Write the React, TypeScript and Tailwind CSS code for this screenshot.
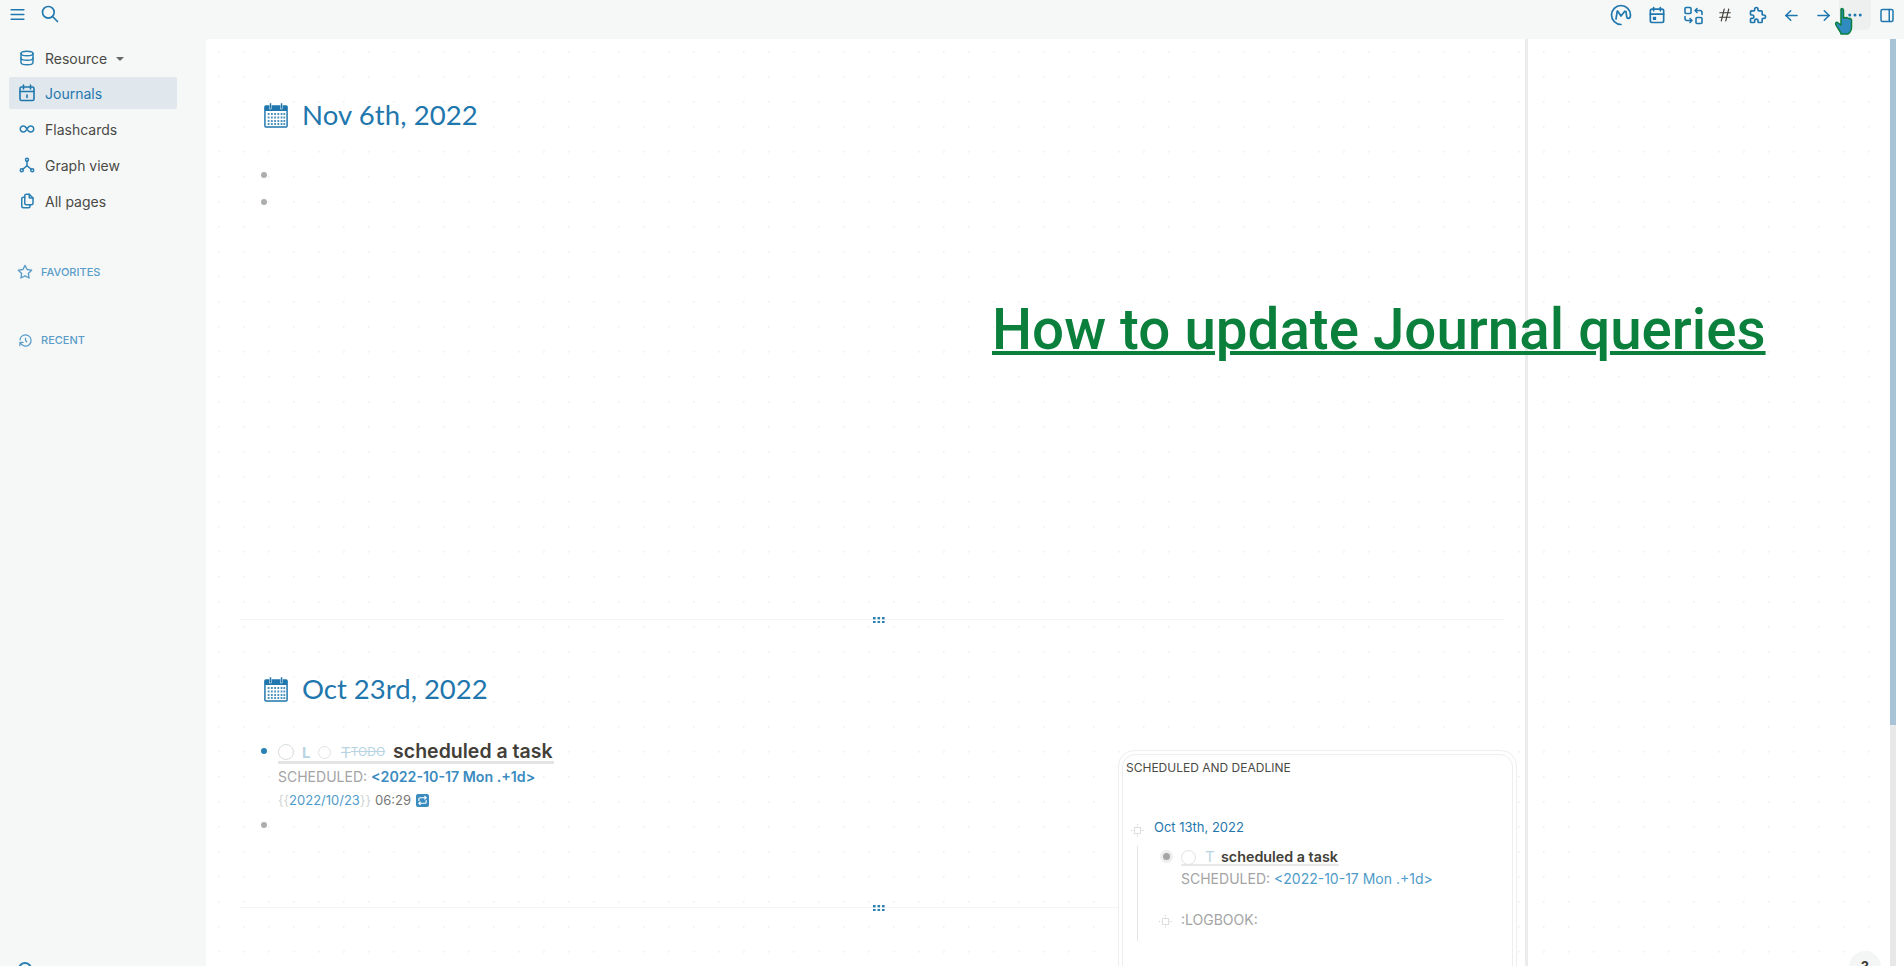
import * as React from 'react';
import {
  TbMenu2, TbSearch, TbDatabase, TbInfinity, TbHierarchy, TbFiles, TbStar, TbHistory,
  TbCalendarEvent, TbHash, TbPuzzle, TbArrowLeft, TbArrowRight, TbDots, TbLayoutSidebarRight, TbRepeat,
} from 'react-icons/tb';

function JournalIcon() {
  return (
    <svg width="24" height="26" viewBox="0 0 26 26" preserveAspectRatio="none" className="ml-[1px] shrink-0">
      <path d="M2 4h22a1 1 0 0 1 1 1v19a1 1 0 0 1-1 1H2a1 1 0 0 1-1-1V5a1 1 0 0 1 1-1z" fill="#fff" stroke="#1f77ad" strokeWidth="1.6" />
      <rect x="1" y="4" width="24" height="5" fill="#1f77ad" />
      <rect x="6" y="1" width="2" height="6" fill="#1f77ad" stroke="#fff" strokeWidth="0.5" />
      <rect x="18" y="1" width="2" height="6" fill="#1f77ad" stroke="#fff" strokeWidth="0.5" />
      {[11, 14.5, 18, 21].map((y) =>
        [4, 7.5, 11, 14.5, 18, 21].map((x) => <rect key={`${x}-${y}`} x={x} y={y} width="2" height="2" fill="#4f93bd" />),
      )}
    </svg>
  );
}

function Grip() {
  return (
    <svg width="12" height="6" viewBox="0 0 12 6" className="ml-[14px] bg-white">
      {[0, 4.5, 9].map((x) => [0, 4].map((y) => <rect key={`${x}-${y}`} x={x} y={y} width="2.6" height="2.4" fill="#2a7fb3" />))}
    </svg>
  );
}

function Divider() {
  return (
    <div className="ml-[34px] mr-[21px] flex h-0 items-center justify-center border-t border-[#f3f4f4]">
      <Grip />
    </div>
  );
}

function Dashed() {
  return (
    <svg width="13" height="13" viewBox="0 0 13 13" className="shrink-0">
      <rect x="3.500" y="3.500" width="6" height="6" fill="none" stroke="#bdbdbd" strokeWidth="1" strokeDasharray="1 1" />
      <path d="M6.500 0v2.500M6.500 10.500v2.500M0 6.500h2.500M10.500 6.500h2.500" stroke="#cfcfcf" strokeWidth="1" strokeDasharray="1 1" />
    </svg>
  );
}

const navItems = [
  { label: 'Flashcards', icon: <TbInfinity size={18} /> },
  { label: 'Graph view', icon: <TbHierarchy size={18} /> },
  { label: 'All pages', icon: <TbFiles size={18} /> },
];

export default function App() {
  return (
    <div className="relative h-screen overflow-hidden bg-[#f6f8f8] font-['Inter',sans-serif] text-[#433f38]">
      <header className="flex h-[39px] items-start text-[#1f77ad]">
        <div className="flex items-center pl-[8px] pt-[4px]">
          <TbMenu2 size={19} />
          <TbSearch size={20} className="ml-[13px]" />
        </div>
        <div className="ml-auto flex items-center pr-[8px]">
          <div className="flex h-[30px] w-[24px] items-center justify-center">
            <svg width="22" height="22" viewBox="0 0 22 22" fill="none" stroke="currentColor" strokeWidth="1.7" strokeLinecap="round" strokeLinejoin="round">
              <path d="M11 20.500a9.500 9.500 0 1 1 9.500-9.500c0 2-1 3.400-2.200 3.400-1.100 0-1.600-1-1.700-2.400L16 7.500l-1.200-.3L11 12 7.500 7l-.3.3L6 15" />
            </svg>
          </div>
          <div className="ml-[13px] flex w-[22px] justify-center"><TbCalendarEvent size={20} /></div>
          <div className="ml-[14px] flex w-[22px] justify-center">
            <svg width="19" height="19" viewBox="0 0 19 19" fill="none" stroke="currentColor" strokeWidth="1.6" strokeLinecap="round" strokeLinejoin="round">
              <rect x="1" y="1.500" width="6" height="6" rx="1" />
              <rect x="12" y="11.500" width="6" height="6" rx="1" />
              <path d="M11 4.500h5a2 2 0 0 1 2 2v2M11 4.500l2-2M11 4.500l2 2M8 14.500H3a2 2 0 0 1-2-2v-2M8 14.500l-2-2M8 14.500l-2 2" />
            </svg>
          </div>
          <div className="ml-[10px] flex w-[22px] justify-center text-[#433f38]"><TbHash size={18} strokeWidth={1.5} /></div>
          <div className="ml-[11px] flex w-[22px] justify-center"><TbPuzzle size={20} /></div>
          <div className="ml-[11px] flex w-[22px] justify-center"><TbArrowLeft size={19} /></div>
          <div className="ml-[10px] flex w-[22px] justify-center"><TbArrowRight size={19} /></div>
          <div className="ml-[5px] flex h-[30px] w-[32px] items-center justify-center rounded-b-md bg-[#eef0f0]"><TbDots size={18} /></div>
          <div className="ml-[7px] flex w-[18px] justify-center"><TbLayoutSidebarRight size={19} /></div>
        </div>
      </header>

      <div className="flex h-[927px]">
        <aside className="w-[206px] shrink-0 pl-[9px] pr-[29px] pt-[1px] text-[14px]">
          <div className="flex h-[36px] items-center pl-[9px] text-[#4a4a45]">
            <span className="flex w-[27px] text-[#2a7fb3]"><TbDatabase size={18} /></span>
            Resource
            <span className="ml-[9px] mt-[1px] h-0 w-0 border-x-[4px] border-t-[4px] border-x-transparent border-t-[#666]" />
          </div>
          <div className="mt-[1px] flex h-[32px] items-center rounded-[2px] bg-[#e0e8ee] pl-[9px] text-[#1f77ad]">
            <span className="flex w-[27px]">
              <svg width="18" height="18" viewBox="0 0 18 18" fill="none" stroke="currentColor" strokeWidth="1.6" strokeLinecap="round" strokeLinejoin="round">
                <rect x="2" y="3" width="14" height="13.500" rx="1.500" />
                <path d="M5.500 1v4M12.500 1v4M2 7.500h14M9 11v2.500" />
              </svg>
            </span>
            Journals
          </div>
          {navItems.map((item, i) => (
            <div key={item.label} className={`flex h-[36px] items-center pl-[9px] text-[#4a4a45] ${i === 0 ? 'mt-[2px]' : ''}`}>
              <span className="flex w-[27px] text-[#2a7fb3]">{item.icon}</span>
              {item.label}
            </div>
          ))}
          <div className="mt-[45px] flex h-[16px] items-center pl-[8px] text-[11px] font-medium text-[#5a9cc8]">
            <TbStar size={16} className="mr-[8px]" /> FAVORITES
          </div>
          <div className="mt-[52px] flex h-[16px] items-center pl-[9px] text-[11px] font-medium text-[#5a9cc8]">
            <TbHistory size={15} className="mr-[8px]" /> RECENT
          </div>
        </aside>

        <main className="relative flex flex-1 overflow-hidden rounded-tl-[4px] bg-white bg-[radial-gradient(circle,#f1f2f2_1px,transparent_1px)] bg-[size:25px_25px]">
          <div className="w-[1322px] shrink-0 border-r-[3px] border-[#ececec]">
            <section className="h-[580px] pt-[63px]">
              <div className="flex h-[26px] items-center pl-[57px]">
                <JournalIcon />
                <h1 className="ml-[14px] font-['Lato',sans-serif] text-[27.500px] leading-none tracking-[0.1px] text-[#1f77ad]">Nov 6th, 2022</h1>
              </div>
              <div className="ml-[55px] mt-[44px] h-[6px] w-[6px] rounded-full bg-[#aaaead]" />
              <div className="ml-[55px] mt-[21px] h-[6px] w-[6px] rounded-full bg-[#aaaead]" />
            </section>
            <Divider />

            <section className="h-[287px] pt-[56px]">
              <div className="flex h-[26px] items-center pl-[57px]">
                <JournalIcon />
                <h1 className="ml-[14px] font-['Lato',sans-serif] text-[27.500px] leading-none text-[#1f77ad]">Oct 23rd, 2022</h1>
              </div>
              <div className="mt-[39px] flex pl-[55px]">
                <div className="mt-[7px] h-[6px] w-[6px] rounded-full bg-[#2a7fb3]" />
                <div className="ml-[11px]">
                  <div className="relative flex h-[22px] w-fit items-center text-[19.500px] font-semibold leading-none">
                    <span className="absolute bottom-[-1px] left-0 h-[3px] w-[276px] bg-[#e4e4e4]" />
                    <span className="relative h-[16px] w-[16px] rounded-full border border-[#d8dddd] bg-white" />
                    <span className="relative ml-[8px] w-[8px] text-[15px] font-bold text-[#b8d4e3]">L</span>
                    <span className="relative ml-[8px] h-[13px] w-[13px] rounded-full border border-[#dfe3e3] bg-white" />
                    <span className="relative ml-[10px] text-[15px] font-normal text-[#b8d4e3] line-through">T</span>
                    <span className="relative text-[12px] font-normal text-[#b8d4e3] line-through">TODO</span>
                    <span className="relative ml-[8px]">scheduled a task</span>
                  </div>
                  <div className="mt-[3px] flex h-[21px] items-center text-[14px]">
                    <span className="text-[#a4a4a4]">SCHEDULED:</span>
                    <span className="ml-[4px] text-[14.200px] font-semibold text-[#3a8bbf]">&lt;2022-10-17 Mon .+1d&gt;</span>
                  </div>
                  <div className="mt-[3px] flex h-[21px] items-center text-[13px]">
                    <span className="text-[#d2d5d5]">{'{{'}</span>
                    <span className="text-[#4f9bc9]">2022/10/23</span>
                    <span className="text-[#d2d5d5]">{'}}'}</span>
                    <span className="ml-[4px] text-[#777]">06:29</span>
                    <span className="ml-[5px] flex h-[13px] w-[13px] items-center justify-center rounded-[2px] bg-[#3a8bbf] text-white"><TbRepeat size={11} strokeWidth={2.6} /></span>
                  </div>
                </div>
              </div>
              <div className="ml-[55px] mt-[11px] h-[6px] w-[6px] rounded-full bg-[#aaaead]" />
            </section>
            <Divider />
          </div>

          <div className="ml-auto mr-[8px] h-full w-[6px] bg-[#e8e8e8]">
            <div className="h-[686px] bg-[#a8c3d6]" />
          </div>

          <div className="absolute left-[912px] top-[711px] h-[300px] w-[399px] rounded-[16px] border border-[#eeeeee] bg-white p-[3px]">
            <div className="h-full rounded-[13px] border border-[#eeeeee] pl-[3px] pr-[4px] pt-[5px]">
              <p className="text-[12px] leading-[16px] text-[#4a4a45]">SCHEDULED AND DEADLINE</p>
              <div className="ml-[5px] mt-[43px] flex h-[18px] items-center text-[13px] text-[#1f77ad]">
                <span className="mt-[5px]"><Dashed /></span>
                <span className="ml-[10px]">Oct 13th, 2022</span>
              </div>
              <div className="ml-[11px] mt-[9px] h-[95px] border-l border-[#e6e6e6] pl-[22px]">
                <div className="flex pt-[3px]">
                  <span className="mt-[1px] flex h-[13px] w-[13px] items-center justify-center rounded-full bg-[#eeeeee]"><span className="h-[7px] w-[7px] rounded-full bg-[#a4a4a4]" /></span>
                  <div className="ml-[8px]">
                    <div className="relative flex h-[16px] w-fit items-center text-[14.300px] font-semibold">
                      <span className="absolute bottom-[-1px] left-0 h-[2px] w-[158px] bg-[#e8e8e8]" />
                      <span className="relative h-[15px] w-[15px] rounded-full border border-[#dfe3e3] bg-white" />
                      <span className="relative ml-[9px] w-[16px] text-[15px] font-normal text-[#b8d4e3]">T</span>
                      <span className="relative">scheduled a task</span>
                    </div>
                    <div className="mt-[4px] flex h-[18px] items-center text-[14px] text-[#a4a4a4]">
                      SCHEDULED:
                      <span className="ml-[4px] text-[#4f9bc9]">&lt;2022-10-17 Mon .+1d&gt;</span>
                    </div>
                  </div>
                </div>
                <div className="ml-[-1px] mt-[23px] flex h-[18px] items-center text-[14px] text-[#a4a4a4]">
                  <span className="mt-[5px]"><Dashed /></span>
                  <span className="ml-[9px]">:LOGBOOK:</span>
                </div>
              </div>
            </div>
          </div>

          <div className="absolute left-[786px] top-[258px] whitespace-nowrap font-['Roboto',sans-serif] text-[56.500px] font-medium leading-[66px] text-[#0b7f3c] underline decoration-[4px]">
            How to update Journal queries
          </div>
        </main>
      </div>

      <svg width="22" height="28" viewBox="0 0 22 28" className="absolute left-[1834px] top-[7px]">
        <path d="M7 2c1.500-1 2.500 0 2.500 1.500V11l1-.5 1 .5 1.500-.5 1.500 1 1.500-.2 1.500 1.200V20c0 3-2 6-3.500 7h-7C7 25 4 22 2 18c-1-2 0-3 1.500-2.500L7 18z" fill="#2f8bc0" stroke="#0b7f3c" strokeWidth="1.500" strokeLinejoin="round" />
      </svg>
      <div className="absolute left-[1849px] top-[951px] flex h-[32px] w-[32px] justify-center rounded-full bg-[#f4f6f6] pt-[5px] text-[14px] font-bold">?</div>
      <div className="absolute left-[18px] top-[962px] h-[14px] w-[14px] rounded-full border-2 border-[#2a7fb3]" />
    </div>
  );
}
